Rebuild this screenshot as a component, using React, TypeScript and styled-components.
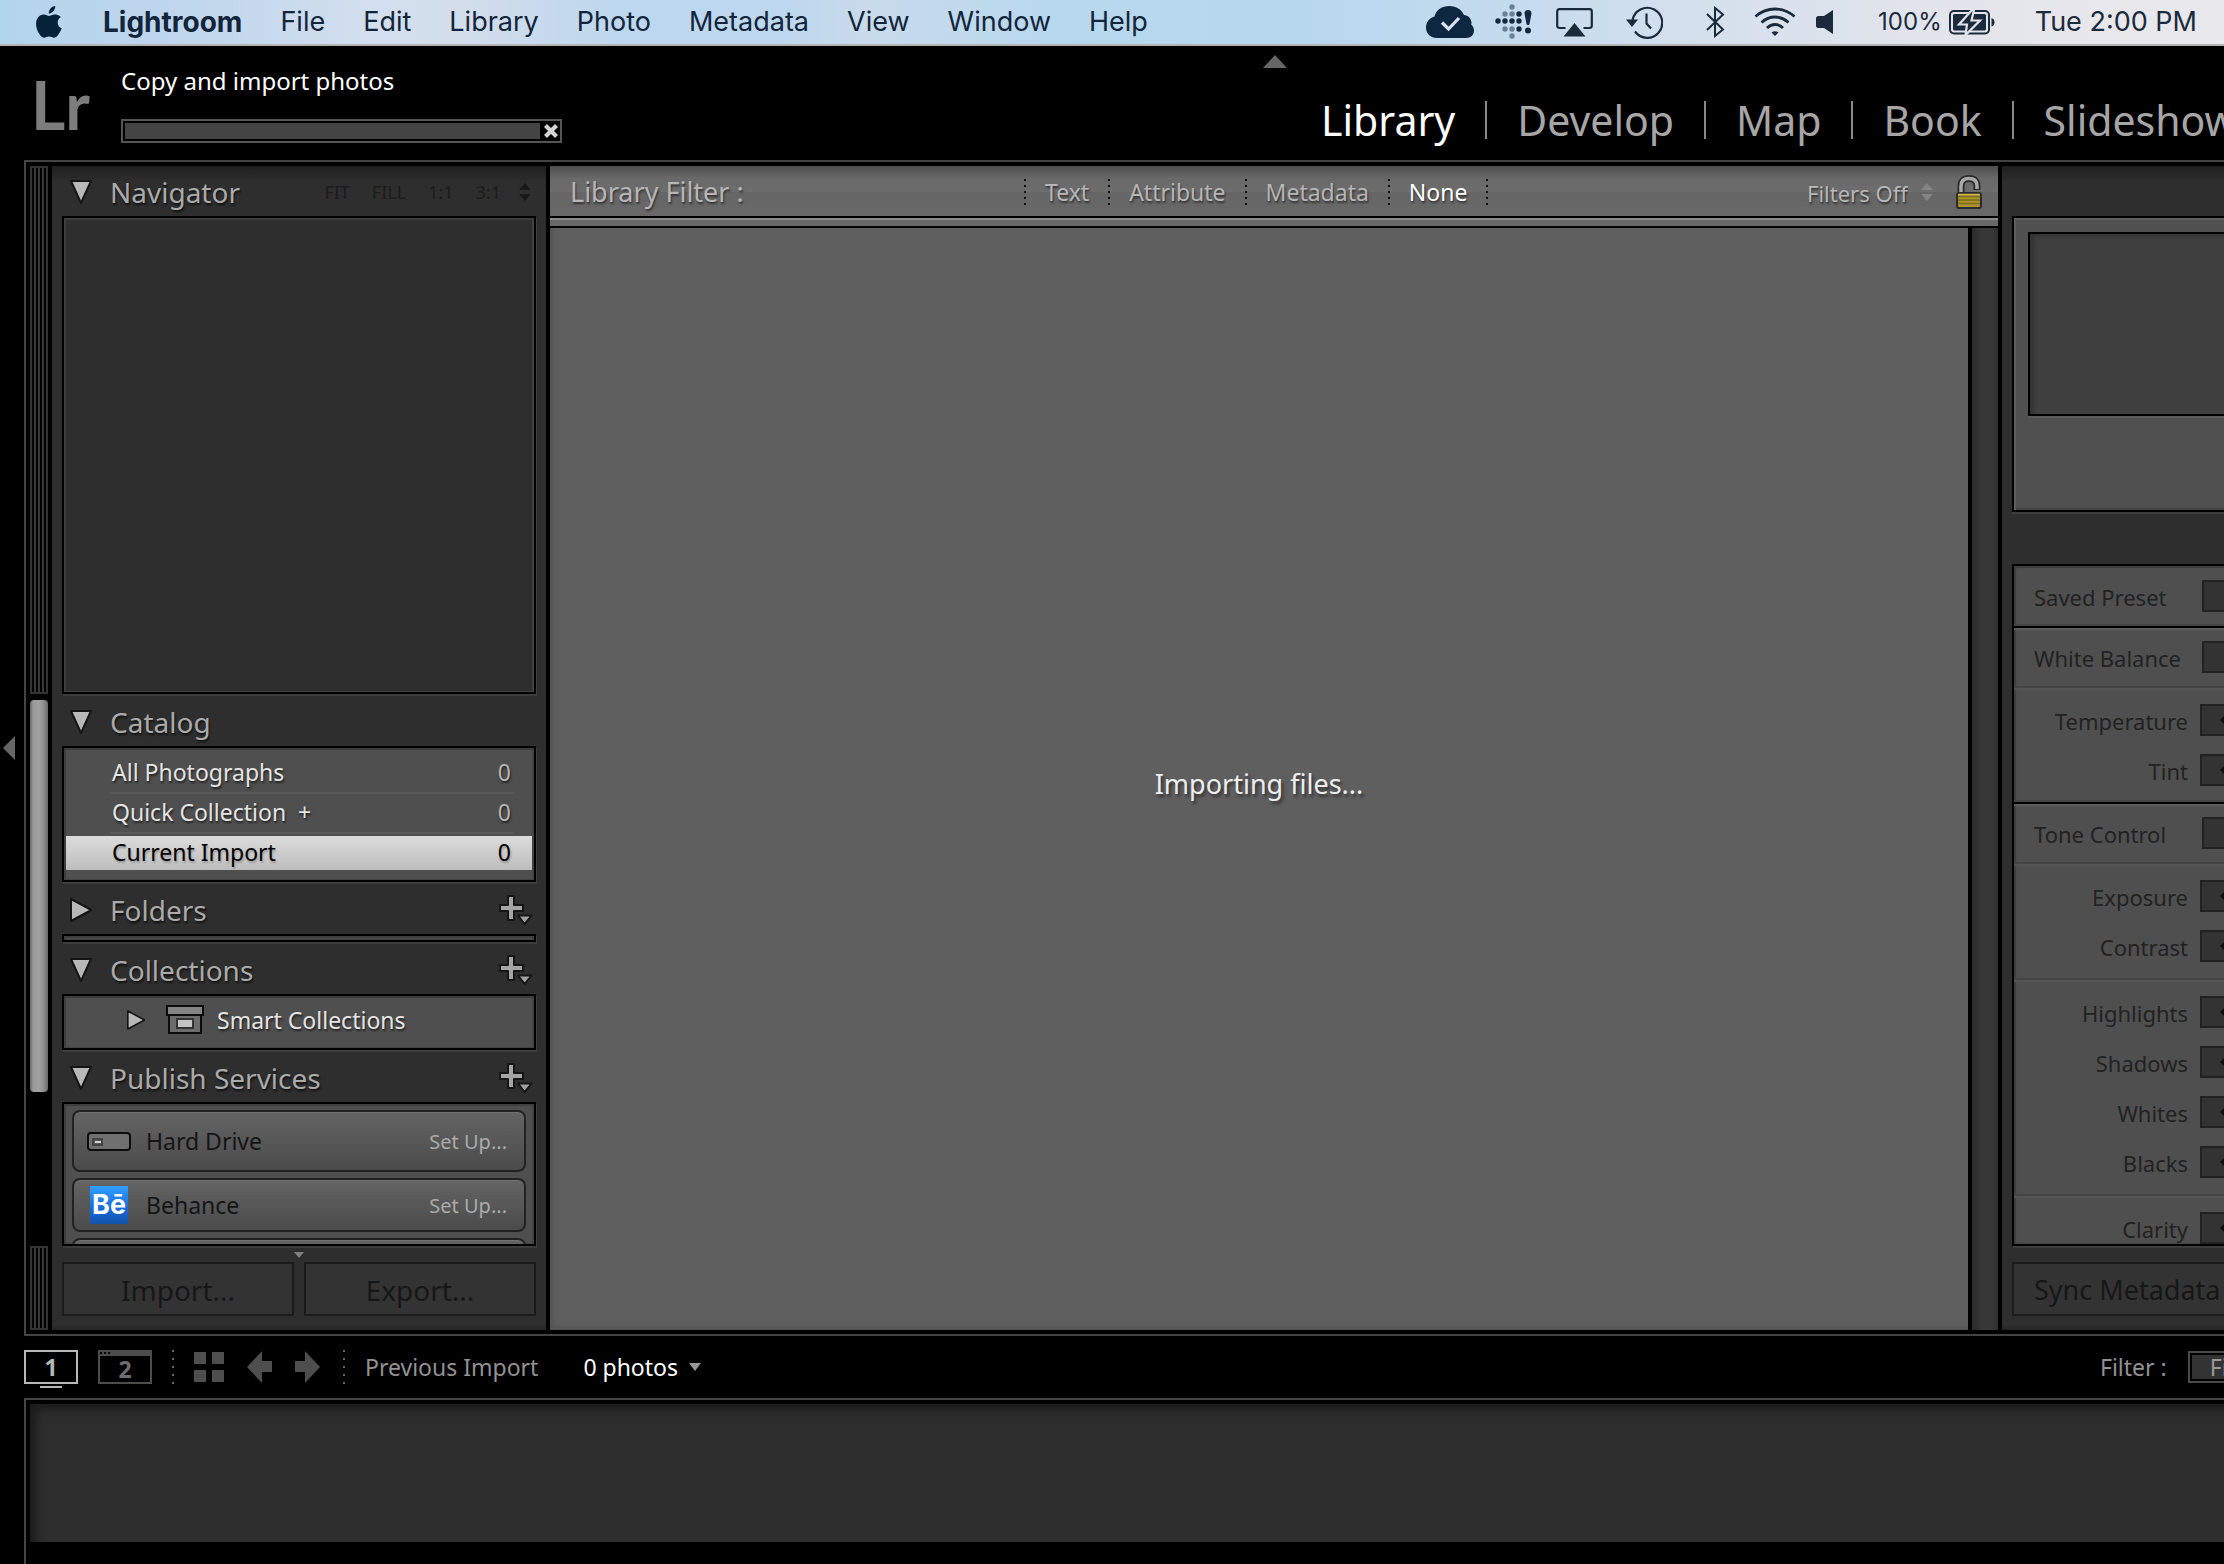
import React from "react";
import styled, { createGlobalStyle, css } from "styled-components";

const GlobalStyle = createGlobalStyle`
  *, *::before, *::after { box-sizing: border-box; }
  body { margin: 0; background: #000; }
  button, select { font: inherit; color: inherit; margin: 0; padding: 0; border: 0; border-radius: 0; background: none; appearance: none; text-align: left; white-space: nowrap; }
  svg { display: block; flex: none; }
  ul { list-style: none; margin: 0; padding: 0; }
`;

const Page = styled.div`
  display: flex;
  flex-direction: column;
  height: 100vh;
  min-width: 1400px;
  overflow: hidden;
  background: #000;
  color: #b0b0b0;
  font-family: "Noto Sans", "Open Sans", sans-serif;
  font-size: 23px;
  line-height: 32px;
`;

/* ---------- system menu bar ---------- */

const MenuBar = styled.header`
  flex: none;
  display: flex;
  align-items: center;
  height: 46px;
  padding: 0 27px 0 36px;
  border-bottom: 2px solid #b4b4b4;
  background: linear-gradient(90deg, #b3d4ed 0%, #bfd6ed 8%, #d3dfee 17%, #d3ddec 21%, #bcd7ee 28%, #bcd7ee 35%, #c9dbeb 39%, #b8d8ee 47%, #b6d7ee 58%, #c5dbee 68%, #d5e0ed 77%, #e4e5ec 88%, #e9e8ec 100%);
  color: #12253a;
  font-family: Inter, Roboto, sans-serif;
  font-size: 27px;
`;

const MenuList = styled.nav`
  display: flex;
  align-items: center;
  gap: 38px;
  margin-left: 41px;
`;

const MenuItem = styled.button<{ $app?: boolean }>`
  ${(p) => p.$app && css`font-size: 28px; font-weight: 700;`}
`;

const StatusArea = styled.div`
  display: flex;
  align-items: center;
  margin-left: auto;
  color: #1b2b3c;
`;

const StatusItem = styled.span<{ $gap: number; $small?: boolean }>`
  margin-left: ${(p) => p.$gap}px;
  font-size: ${(p) => (p.$small ? 24 : 27)}px;
  white-space: nowrap;
`;

/* ---------- identity bar ---------- */

const Header = styled.div`
  flex: none;
  display: flex;
  height: 114px;
  padding-left: 31px;
`;

const Logo = styled.div`
  flex: 0 0 90px;
  padding-top: 6px;
  color: #7d7d7d;
  font-family: Lato, sans-serif;
  font-size: 66px;
  font-weight: 700;
  line-height: 106px;
`;

const Activity = styled.div`
  display: flex;
  flex-direction: column;
  gap: 22px;
  width: 441px;
  padding-top: 19px;
  color: #fff;
  font-size: 24px;
`;

const ProgressFrame = styled.div`
  display: flex;
  align-items: center;
  gap: 4px;
  height: 24px;
  padding: 2px;
  border: 2px solid #555;
`;

const ProgressTrack = styled.div`
  flex: 1;
  height: 16px;
  background: #444;
`;

const ModuleArea = styled.div`
  flex: 0 0 961px;
  display: flex;
  flex-direction: column;
  align-items: flex-start;
  min-width: 0;
  margin-left: auto;
  padding-top: 9px;
`;

const ModuleNav = styled.nav`
  display: flex;
  align-items: center;
  gap: 30px;
  margin-top: 33px;
  padding-left: 58px;
  font-size: 41px;
  line-height: 38px;
`;

const ModuleLink = styled.a<{ $active?: boolean }>`
  color: ${(p) => (p.$active ? "#fff" : "#a6a6a6")};
  text-decoration: none;
  white-space: nowrap;
`;

const ModuleRule = styled.span`
  flex: none;
  width: 2px;
  height: 38px;
  background: #888;
`;

/* ---------- work area ---------- */

const WorkArea = styled.main`
  flex: 1;
  display: flex;
  min-height: 0;
`;

const Gutter = styled.div`
  flex: 0 0 24px;
  display: flex;
  align-items: center;
  padding-left: 3px;
`;

const Frame = styled.div`
  flex: 1;
  display: grid;
  grid-template-columns: 18px 494px minmax(0, 1fr) 222px;
  grid-template-rows: minmax(0, 1fr);
  gap: 4px;
  min-width: 0;
  padding: 4px 0 4px 4px;
  border: 2px solid #444;
  border-right: 0;
`;

const Scroller = styled.div`
  display: flex;
  flex-direction: column;
`;

const Grip = styled.div<{ $h: number }>`
  flex: 0 0 ${(p) => p.$h}px;
  border: 2px solid #333;
  background: repeating-linear-gradient(90deg, #000 0 2px, #383838 2px 4px);
  &:last-child { margin-top: auto; }
`;

const Thumb = styled.div`
  flex: 0 0 392px;
  margin-top: 6px;
  border-radius: 4px;
  background: linear-gradient(90deg, #666 0, #999 3px, #a2a2a2 50%, #8c8c8c 14px, #666 100%);
`;

const SidePanel = styled.aside`
  display: flex;
  flex-direction: column;
  min-height: 0;
  overflow: hidden;
  padding: 0 10px;
  background: linear-gradient(#1f1f1f, #2e2e2e 16px, #2e2e2e calc(100% - 6px), #262626);
`;

const PanelTitle = styled.div<{ $first?: boolean }>`
  flex: 0 0 ${(p) => (p.$first ? 50 : 52)}px;
  display: flex;
  align-items: center;
  padding: ${(p) => (p.$first ? 2 : 4)}px 0 0 8px;
`;

const TitleToggle = styled.button`
  display: flex;
  align-items: center;
  gap: 18px;
  color: #aaa;
  font-size: 28px;
  text-shadow: 1px 2px 2px #111;
`;

const TitleTools = styled.div`
  display: flex;
  align-items: center;
  margin-left: auto;
  padding: 2px 3px 0 0;
`;

const ZoomTools = styled(TitleTools)`
  gap: 22px;
  padding: 0 5px 0 0;
  color: #1c1c1c;
  font-size: 18px;
  & > :last-child { margin-left: -4px; }
`;

const Well = styled.div<{ $dark?: boolean; $h?: number; $fill?: boolean }>`
  flex: ${(p) => (p.$fill ? "1 1 0" : p.$h ? `0 0 ${p.$h}px` : "none")};
  min-height: 0;
  overflow: hidden;
  border: 2px solid #000;
  background: ${(p) => (p.$dark ? "#2e2e2e" : "#4f4f4f")};
  box-shadow: 1px 2px 0 #3d3d3d, inset 2px 2px 1px #3e3e3e, inset -2px -1px 1px #434343;
`;

const CatalogList = styled.ul`
  display: flex;
  flex-direction: column;
  gap: 2px;
  padding: 8px 0 10px;
`;

const CatalogDivider = styled.li`
  height: 2px;
  margin: 0 20px 0 46px;
  background: #595959;
`;

const CatalogRow = styled.button<{ $selected?: boolean }>`
  display: flex;
  justify-content: space-between;
  align-items: center;
  width: calc(100% - 4px);
  height: 34px;
  margin: 0 2px;
  padding: 0 21px 3px 46px;
  color: #e4e4e4;
  text-shadow: 1px 2px 2px #222;
  white-space: pre;
  & > span:last-child { color: #b4b4b4; }
  ${(p) =>
    p.$selected &&
    css`
      color: #000;
      background: linear-gradient(#dcdcdc, #bdbdbd);
      text-shadow: 1px 2px 2px #999;
      & > span:last-child { color: #000; }
    `}
`;

const CollectionRow = styled.button`
  display: flex;
  align-items: center;
  width: 100%;
  height: 48px;
  padding-left: 63px;
  color: #e4e4e4;
  text-shadow: 1px 2px 2px #222;
  & > svg:nth-child(2) { margin: 0 13px 0 21px; }
`;

const ServiceList = styled.ul`
  display: flex;
  flex-direction: column;
  gap: 6px;
  padding: 6px 8px;
`;

const ServiceCard = styled.li<{ $h: number }>`
  flex: 0 0 ${(p) => p.$h}px;
  display: flex;
  align-items: center;
  padding: 0 17px 0 13px;
  border: 2px solid #222;
  border-radius: 8px;
  background: linear-gradient(#646464, #4b4b4b);
  box-shadow: inset 0 1px 0 #717171;
  color: #151515;
`;

const ServiceIcon = styled.span`
  display: flex;
  justify-content: center;
  width: 44px;
  margin-right: 15px;
`;

const BehanceTile = styled.span`
  width: 38px;
  height: 38px;
  background: linear-gradient(#2fa0ff, #1769dd 60%, #1352a8);
  color: #fff;
  font: 700 27px/38px Inter, sans-serif;
  text-align: center;
`;

const SetUp = styled.button`
  margin-left: auto;
  padding-top: 2px;
  color: #aaa;
  font-size: 20px;
`;

const PanelFooter = styled.div`
  flex: 0 0 84px;
  display: flex;
  flex-direction: column;
  align-items: center;
  gap: 4px;
  padding-top: 6px;
`;

const FooterButtons = styled.div`
  display: flex;
  align-self: stretch;
  gap: 10px;
`;

const FooterButton = styled.button<{ $start?: boolean }>`
  flex: 1;
  height: 54px;
  padding: 2px 20px 0;
  border: 2px solid #1b1b1b;
  background: #333;
  color: #171717;
  font-size: 28px;
  text-align: ${(p) => (p.$start ? "left" : "center")};
`;

/* ---------- centre ---------- */

const Center = styled.section`
  display: flex;
  flex-direction: column;
  min-width: 0;
`;

const FilterBar = styled.div`
  flex: 0 0 50px;
  display: flex;
  align-items: center;
  padding: 2px 16px 0 20px;
  background: linear-gradient(#4e4e4e, #686868 12px, #6e6e6e 26px, #666 26px, #686868);
  color: #b6b6b6;
  text-shadow: 1px 2px 2px #333;
`;

const FilterTitle = styled.span`
  flex: 0 0 454px;
  font-size: 27px;
`;

const FilterTabs = styled.div`
  display: flex;
  align-items: center;
  gap: 19px;
`;

const FilterTab = styled.button<{ $active?: boolean }>`
  color: ${(p) => (p.$active ? "#fff" : "inherit")};
  text-shadow: inherit;
`;

const Dots = styled.span<{ $sparse?: boolean }>`
  flex: none;
  width: 2px;
  height: ${(p) => (p.$sparse ? 34 : 26)}px;
  background: repeating-linear-gradient(${(p) => (p.$sparse ? "#666" : "#0c0c0c")} 0 2px, transparent 2px ${(p) => (p.$sparse ? 8 : 6)}px);
`;

const FilterPreset = styled.div`
  display: flex;
  align-items: center;
  gap: 13px;
  margin-left: auto;
  & > button { margin-left: 10px; }
  select { padding-top: 2px; font-size: 22px; text-shadow: inherit; }
`;

const BarEdge = styled.div`
  flex: 0 0 12px;
  border: 2px solid #000;
  border-width: 2px 0;
  background: linear-gradient(#8a8a8a 2px, #686868 2px);
`;

const CanvasRow = styled.div`
  flex: 1;
  display: grid;
  grid-template-columns: minmax(0, 1fr) 26px;
  gap: 4px;
  min-height: 0;
`;

const Canvas = styled.div`
  display: grid;
  place-items: center;
  padding-top: 10px;
  background: #5f5f5f;
  box-shadow: inset 4px -4px 4px #555;
  color: #ededed;
  font-size: 27px;
  text-shadow: 2px 3px 3px #333;
`;

const CanvasScroll = styled.div`
  background: linear-gradient(90deg, #2b2b2b, #373737 10px, #373737 20px, #2e2e2e);
`;

/* ---------- right panel ---------- */

const RightPanel = styled(SidePanel)`
  padding: 50px 0 14px 10px;
  color: #222;
  font-size: 22px;
`;

const HistogramWell = styled(Well)`
  width: 480px;
  margin-bottom: 52px;
  padding: 14px;
  background: #505050;
  box-shadow: 0 2px 0 #3d3d3d, inset 2px 2px 0 #5e5e5e, inset 0 -2px 0 #444;
`;

const Histogram = styled.div`
  height: 184px;
  border: 2px solid #000;
  background: #404040;
  box-shadow: 0 2px 0 #5c5c5c, inset 4px 3px 4px #333;
`;

const DevelopWell = styled(Well)`
  width: 480px;
`;

const Group = styled.div<{ $rule?: "strong" | "soft" }>`
  ${(p) => p.$rule === "strong" && css`border-top: 2px solid #000; box-shadow: inset 0 2px 0 #5c5c5c, 0 -2px 0 #444;`}
  ${(p) => p.$rule === "soft" && css`border-top: 2px solid #444; box-shadow: inset 0 2px 0 #555; padding: 7px 0;`}
`;

const PresetRow = styled.div<{ $h: number }>`
  display: grid;
  grid-template-columns: 168px 1fr;
  align-items: center;
  height: ${(p) => p.$h}px;
  padding-left: 20px;
  & > label { padding-top: 2px; }
`;

const SliderRow = styled.div`
  display: grid;
  grid-template-columns: 174px 1fr;
  column-gap: 12px;
  align-items: center;
  height: 50px;
  & > span { padding-top: 2px; text-align: right; }
`;

const fieldBox = css`
  width: 200px;
  height: 32px;
  border: 2px solid #222;
  background: #333;
`;

const PresetSelect = styled.select`
  ${fieldBox}
  opacity: 1;
`;

const StepButton = styled.button`
  ${fieldBox}
  padding-left: 18px;
`;

const SyncButton = styled(FooterButton)`
  flex: 0 0 54px;
  width: 480px;
  margin-top: 16px;
  font-size: 27px;
`;

/* ---------- toolbar and filmstrip ---------- */

const Toolbar = styled.div`
  flex: 0 0 62px;
  display: flex;
  align-items: center;
  gap: 20px;
  padding-left: 24px;
  color: #929292;
`;

const NavButtons = styled.div`
  display: flex;
  align-items: center;
  gap: 23px;
  padding-right: 3px;
`;

const DisplayButton = styled.button<{ $main?: boolean }>`
  position: relative;
  width: 54px;
  height: 34px;
  border: 2px solid ${(p) => (p.$main ? "#b8b8b8" : "#4c4c4c")};
  border-top-width: ${(p) => (p.$main ? 2 : 6)}px;
  color: ${(p) => (p.$main ? "#b8b8b8" : "#6e6e6e")};
  font-weight: 700;
  line-height: 26px;
  text-align: center;
  &::after {
    content: "";
    position: absolute;
    ${(p) =>
      p.$main
        ? "left: 14px; bottom: -6px; width: 22px; height: 2px; background: #b8b8b8;"
        : "left: 0; top: -4px; width: 10px; height: 2px; background: repeating-linear-gradient(90deg, #000 0 2px, transparent 2px 4px);"}
  }
`;

const PhotoCount = styled.button`
  display: flex;
  align-items: center;
  gap: 11px;
  margin-left: 25px;
  color: #fff;
`;

const FilmFilter = styled.div`
  flex: 0 0 124px;
  display: flex;
  align-items: center;
  gap: 21px;
  margin-left: auto;
  overflow: hidden;
  white-space: nowrap;
`;

const FilmSelect = styled.select`
  flex: none;
  width: 160px;
  height: 32px;
  padding-left: 20px;
  border: 2px solid #4a4a4a;
  outline: 2px solid #000;
  outline-offset: -4px;
  background: #333;
  color: #999;
  line-height: 28px;
`;

const Filmstrip = styled.section`
  flex: 0 0 166px;
  margin-left: 24px;
  padding: 4px 0 22px 4px;
  border: 2px solid #444;
  border-width: 2px 0 0 2px;
`;

const Film = styled.div`
  height: 100%;
  background: #2e2e2e;
  box-shadow: inset 8px 8px 10px -2px #1b1b1b;
`;

/* ---------- icons ---------- */

const Apple = () => (
  <svg width="26" height="32" viewBox="0 0 26 32" fill="#06213a">
    <path d="M19.2 0c.2 1.9-.6 3.700-1.700 5.100-1.200 1.400-3 2.400-4.700 2.300-.2-1.800.7-3.700 1.700-4.900C15.700 1.100 17.700.1 19.200 0zM24.900 10.900c-2 1.200-3.200 3.100-3.200 5.500 0 2.800 1.700 5 4 5.900-.6 1.900-1.600 3.800-2.800 5.500-1.300 1.900-2.700 3.900-4.800 3.900-2 0-2.600-1.200-5-1.200-2.300 0-3.100 1.200-5 1.200-2 .1-3.600-2-4.900-3.900C.5 24-1.300 17.200 1.400 12.500c1.400-2.400 3.800-3.900 6.500-3.900 2 0 4 1.400 5.200 1.400 1.200 0 3.600-1.700 6-1.400 1 0 4 .4 5.800 2.300z" />
  </svg>
);

const CloudCheck = () => (
  <svg width="48" height="32" viewBox="0 0 48 32">
    <path d="M11 32C4.500 32 0 27.500 0 21.500 0 16 3.500 12 8.500 10.500 10 4 16 0 23.500 0c7 0 12 3.500 14.500 9 4 .3 7 3 7.500 7.500-.1 1-.1 1.500-.3 2C47 20 48 22 48 24.500 48 29 45 32 40 32z" fill="#0d2740" />
    <path d="M16 16.500l6.500 6.500L33 12" fill="none" stroke="#d5e4f2" strokeWidth="3.200" />
  </svg>
);

const dots: [number, number, boolean][] = [
  [17, 3, false], [10, 10, false], [17, 10, false], [24, 10, true],
  [3, 17, true], [10, 17, true], [17, 17, true], [24, 17, true],
  [10, 25, false], [17, 25, false], [24, 25, true], [17, 32, false],
];

const DotAlert = () => (
  <svg width="38" height="36" viewBox="0 0 38 36" fill="#12283e">
    {dots.map(([x, y, on], i) => (
      <circle key={i} cx={x} cy={y} r="2.700" opacity={on ? 1 : 0.5} />
    ))}
    <path d="M33 6c2 0 3.500 1 3.500 3.500L34.500 20c-.3 1.600-2.700 1.600-3 0l-2-10.500C29.500 7 31 6 33 6z" />
    <circle cx="33" cy="26.500" r="3" />
  </svg>
);

const AirPlay = () => (
  <svg width="37" height="29" viewBox="0 0 37 29">
    <path d="M9.500 20H3.500Q1.200 20 1.200 17.500V3.500Q1.200 1.200 3.500 1.200h30Q35.800 1.200 35.800 3.500v14q0 2.500-2.300 2.500h-6" fill="none" stroke="currentColor" strokeWidth="2.200" />
    <path d="M18.500 15L29.500 28.500H7.500z" fill="currentColor" />
  </svg>
);

const TimeMachine = () => (
  <svg width="37" height="33" viewBox="0 0 37 33">
    <path d="M6.500 14A15 15 0 1 1 9 25.500" fill="none" stroke="currentColor" strokeWidth="2.200" />
    <path d="M0 13.500h12L6 21z" fill="currentColor" />
    <path d="M20.500 7.500v10l4.500 5" fill="none" stroke="currentColor" strokeWidth="2.200" />
  </svg>
);

const Bluetooth = () => (
  <svg width="20" height="32" viewBox="0 0 20 32" fill="none" stroke="currentColor" strokeWidth="2">
    <path d="M1 8l16 15.500-8 6.500V2l8 6.500L1 24" />
  </svg>
);

const Wifi = () => (
  <svg width="42" height="30" viewBox="0 0 42 30" fill="none" stroke="currentColor" strokeWidth="2.800">
    <path d="M1.500 9.500Q10 2 21 2t19.500 7.500M7.500 15.500Q13.500 10 21 10t13.500 5.500M13 21q3.500-3.500 8-3.500T29 21" />
    <path d="M17.500 25.500q3.500-2.500 7 0L21 29z" fill="currentColor" stroke="none" />
  </svg>
);

const Speaker = () => (
  <svg width="18" height="24" viewBox="0 0 18 24" fill="currentColor">
    <path d="M2.500 6H8l9-6v24l-9-6H2.500Q0 18 0 15.500v-7Q0 6 2.500 6z" />
  </svg>
);

const Battery = () => (
  <svg width="46" height="25" viewBox="0 0 46 25">
    <rect x="1" y="1" width="39" height="22.500" rx="4" fill="none" stroke="currentColor" strokeWidth="2" />
    <rect x="4" y="4" width="33" height="16.500" rx="1.500" fill="currentColor" />
    <path d="M42.500 8q3 1 3 4.300t-3 4.300z" fill="currentColor" />
    <path d="M23 0L10 14.500h8L16.500 25 31 10.500h-8.500L25 0z" fill="currentColor" stroke="#e2e4ec" strokeWidth="2.200" />
  </svg>
);

const Cross = () => (
  <svg width="14" height="14" viewBox="0 0 14 14" stroke="#d4d4d4" strokeWidth="4.200">
    <path d="M1.500 1.500l11 11M12.500 1.500l-11 11" />
  </svg>
);

const Triangle = ({ dir = "down", small }: { dir?: "down" | "right"; small?: boolean }) => (
  <svg width={small ? 18 : 22} height={small ? 20 : 24} viewBox="0 0 22 24" fill="#b8b8b8" stroke="#151515" strokeWidth="2" strokeLinejoin="round">
    <path d={dir === "down" ? "M1 1h20L11 23z" : "M1 1v22L21.500 12z"} />
  </svg>
);

const Flat = ({ w, h, d, fill }: { w: number; h: number; d: string; fill: string }) => (
  <svg width={w} height={h} viewBox={`0 0 ${w} ${h}`} fill={fill}>
    <path d={d} />
  </svg>
);

const AddMenu = () => (
  <svg width="34" height="32" viewBox="0 0 34 32" stroke="#151515" strokeWidth="2" strokeLinejoin="round">
    <path d="M9 1h6v9h9v6h-9v9H9v-9H1v-6h8z" fill="#a4a4a4" />
    <path d="M19 20.500h13.500L25.700 29z" fill="#a0a0a0" />
  </svg>
);

const UpDown = ({ fill }: { fill: string }) => (
  <svg width="12" height="18" viewBox="0 0 12 18" fill={fill}>
    <path d="M6 0l6 7H0zM6 18l6-7H0z" />
  </svg>
);

const CollectionBox = () => (
  <svg width="38" height="30" viewBox="0 0 38 30" stroke="#0c0c0c" strokeWidth="2">
    <rect x="3" y="9" width="32" height="19" fill="#6c6c6c" />
    <rect x="1" y="1" width="36" height="9" fill="#848484" />
    <rect x="11" y="14" width="16" height="9" fill="#c4c4c4" stroke="#333" />
  </svg>
);

const HardDrive = () => (
  <svg width="44" height="19" viewBox="0 0 44 19">
    <rect x="1" y="1" width="42" height="17" rx="3" fill="#707070" stroke="#0c0c0c" strokeWidth="2" />
    <rect x="6" y="7" width="9" height="6" fill="#5a5a5a" stroke="#444" strokeWidth="2" />
    <rect x="8" y="9" width="6" height="2" fill="#d0d0d0" />
  </svg>
);

const Padlock = () => (
  <svg width="26" height="34" viewBox="0 0 26 34">
    <path d="M5 19v-8C5 6 8 3.500 13 3.500s8 2.500 8 7.500v4" fill="none" stroke="#2b2b2b" strokeWidth="7" />
    <path d="M5 19v-8C5 6 8 3.500 13 3.500s8 2.500 8 7.500v3" fill="none" stroke="#a8a8a8" strokeWidth="3.500" />
    <rect x="1" y="18" width="24" height="15" rx="2" fill="#a8922a" stroke="#2b2b2b" strokeWidth="2" />
    <path d="M2 21.500h22M2 25h22M2 28.500h22" stroke="#7d6b1a" strokeWidth="1.500" />
    <path d="M2 19.500h22" stroke="#c9ba55" strokeWidth="1.500" />
  </svg>
);

const GridIcon = () => (
  <Flat w={30} h={30} fill="#4e4e4e" d="M0 0h12v12H0zM18 0h12v12H18zM0 18h12v12H0zM18 18h12v12H18z" />
);

/* ---------- composed parts ---------- */

const menus = ["File", "Edit", "Library", "Photo", "Metadata", "View", "Window", "Help"];
const modules = ["Library", "Develop", "Map", "Book", "Slideshow"];
const filters = ["Text", "Attribute", "Metadata", "None"];
const catalog = [
  { name: "All Photographs", count: 0 },
  { name: "Quick Collection  +", count: 0 },
  { name: "Current Import", count: 0, selected: true },
];

function Title({ children, closed, add }: { children: string; closed?: boolean; add?: boolean }) {
  return (
    <PanelTitle>
      <TitleToggle aria-expanded={!closed}>
        <Triangle dir={closed ? "right" : "down"} />
        {children}
      </TitleToggle>
      {add && (
        <TitleTools>
          <button aria-label={`Add to ${children}`}><AddMenu /></button>
        </TitleTools>
      )}
    </PanelTitle>
  );
}

function Preset({ label, h }: { label: string; h: number }) {
  const id = React.useId();
  return (
    <PresetRow $h={h}>
      <label htmlFor={id}>{label}</label>
      <PresetSelect id={id} disabled />
    </PresetRow>
  );
}

function Sliders({ names }: { names: string[] }) {
  return (
    <Group $rule="soft">
      {names.map((n) => (
        <SliderRow key={n}>
          <span>{n}</span>
          <StepButton aria-label={`Decrease ${n}`}>
            <Flat w={10} h={10} fill="#0e0e0e" d="M0 5l5-5h5v10H5z" />
          </StepButton>
        </SliderRow>
      ))}
    </Group>
  );
}

export default function App() {
  return (
    <Page>
      <GlobalStyle />
      <MenuBar>
        <button aria-label="System menu"><Apple /></button>
        <MenuList>
          <MenuItem $app>Lightroom</MenuItem>
          {menus.map((m) => <MenuItem key={m}>{m}</MenuItem>)}
        </MenuList>
        <StatusArea>
          <StatusItem $gap={0}><CloudCheck /></StatusItem>
          <StatusItem $gap={21}><DotAlert /></StatusItem>
          <StatusItem $gap={23}><AirPlay /></StatusItem>
          <StatusItem $gap={33}><TimeMachine /></StatusItem>
          <StatusItem $gap={43}><Bluetooth /></StatusItem>
          <StatusItem $gap={28}><Wifi /></StatusItem>
          <StatusItem $gap={20}><Speaker /></StatusItem>
          <StatusItem $gap={44} $small>100%</StatusItem>
          <StatusItem $gap={7}><Battery /></StatusItem>
          <StatusItem $gap={40}>Tue 2:00 PM</StatusItem>
        </StatusArea>
      </MenuBar>

      <Header>
        <Logo>Lr</Logo>
        <Activity>
          <span>Copy and import photos</span>
          <ProgressFrame>
            <ProgressTrack role="progressbar" aria-label="Copy and import photos" />
            <button aria-label="Cancel import"><Cross /></button>
          </ProgressFrame>
        </Activity>
        <ModuleArea>
          <button aria-label="Hide module picker"><Flat w={24} h={13} fill="#666" d="M12 0l12 13H0z" /></button>
          <ModuleNav>
            {modules.map((m, i) => (
              <React.Fragment key={m}>
                {i > 0 && <ModuleRule />}
                <ModuleLink href={`#${m.toLowerCase()}`} $active={i === 0}>{m}</ModuleLink>
              </React.Fragment>
            ))}
          </ModuleNav>
        </ModuleArea>
      </Header>

      <WorkArea>
        <Gutter>
          <button aria-label="Hide left panel"><Flat w={12} h={24} fill="#666" d="M12 0v24L0 12z" /></button>
        </Gutter>
        <Frame>
          <Scroller>
            <Grip $h={528} />
            <Thumb />
            <Grip $h={84} />
          </Scroller>

          <SidePanel>
            <PanelTitle $first>
              <TitleToggle aria-expanded><Triangle />Navigator</TitleToggle>
              <ZoomTools>
                <button>FIT</button>
                <button>FILL</button>
                <button>1:1</button>
                <button>3:1</button>
                <button aria-label="Zoom ratio"><UpDown fill="#1a1a1a" /></button>
              </ZoomTools>
            </PanelTitle>
            <Well $dark $h={478} />

            <Title>Catalog</Title>
            <Well>
              <CatalogList>
                {catalog.map((c, i) => (
                  <React.Fragment key={c.name}>
                    {i > 0 && <CatalogDivider aria-hidden />}
                    <li>
                      <CatalogRow $selected={c.selected}>
                        <span>{c.name}</span>
                        <span>{c.count}</span>
                      </CatalogRow>
                    </li>
                  </React.Fragment>
                ))}
              </CatalogList>
            </Well>

            <Title closed add>Folders</Title>
            <Well $h={8} />

            <Title add>Collections</Title>
            <Well $h={56}>
              <CollectionRow>
                <Triangle dir="right" small />
                <CollectionBox />
                Smart Collections
              </CollectionRow>
            </Well>

            <Title add>Publish Services</Title>
            <Well $fill>
              <ServiceList>
                <ServiceCard $h={62}>
                  <ServiceIcon><HardDrive /></ServiceIcon>
                  Hard Drive
                  <SetUp>Set Up...</SetUp>
                </ServiceCard>
                <ServiceCard $h={54}>
                  <ServiceIcon><BehanceTile>Bē</BehanceTile></ServiceIcon>
                  Behance
                  <SetUp>Set Up...</SetUp>
                </ServiceCard>
                <ServiceCard $h={54} />
              </ServiceList>
            </Well>

            <PanelFooter>
              <Flat w={10} h={6} fill="#808080" d="M0 0h10L5 6z" />
              <FooterButtons>
                <FooterButton>Import...</FooterButton>
                <FooterButton>Export...</FooterButton>
              </FooterButtons>
            </PanelFooter>
          </SidePanel>

          <Center>
            <FilterBar>
              <FilterTitle>Library Filter :</FilterTitle>
              <FilterTabs>
                <Dots />
                {filters.map((f) => (
                  <React.Fragment key={f}>
                    <FilterTab $active={f === "None"}>{f}</FilterTab>
                    <Dots />
                  </React.Fragment>
                ))}
              </FilterTabs>
              <FilterPreset>
                <select aria-label="Filter preset"><option>Filters Off</option></select>
                <UpDown fill="#858585" />
                <button aria-label="Lock filters"><Padlock /></button>
              </FilterPreset>
            </FilterBar>
            <BarEdge />
            <CanvasRow>
              <Canvas>Importing files...</Canvas>
              <CanvasScroll />
            </CanvasRow>
          </Center>

          <RightPanel>
            <HistogramWell $h={296}><Histogram /></HistogramWell>
            <DevelopWell $fill>
              <Group><Preset label="Saved Preset" h={60} /></Group>
              <Group $rule="strong"><Preset label="White Balance" h={58} /></Group>
              <Sliders names={["Temperature", "Tint"]} />
              <Group $rule="strong"><Preset label="Tone Control" h={58} /></Group>
              <Sliders names={["Exposure", "Contrast"]} />
              <Sliders names={["Highlights", "Shadows", "Whites", "Blacks"]} />
              <Sliders names={["Clarity"]} />
            </DevelopWell>
            <SyncButton $start>Sync Metadata</SyncButton>
          </RightPanel>
        </Frame>
      </WorkArea>

      <Toolbar>
        <DisplayButton $main>1</DisplayButton>
        <DisplayButton>2</DisplayButton>
        <Dots $sparse />
        <NavButtons>
          <button aria-label="Grid"><GridIcon /></button>
          <button aria-label="Back"><Flat w={25} h={32} fill="#4e4e4e" d="M15 0v10h10v11H15v11L0 16z" /></button>
          <button aria-label="Forward"><Flat w={25} h={32} fill="#4e4e4e" d="M10 0v10H0v11h10v11L25 16z" /></button>
        </NavButtons>
        <Dots $sparse />
        <span>Previous Import</span>
        <PhotoCount>
          0 photos
          <Flat w={12} h={8} fill="#999" d="M0 0h12L6 8z" />
        </PhotoCount>
        <FilmFilter>
          <label htmlFor="film-filter">Filter :</label>
          <FilmSelect id="film-filter"><option>Filters Off</option></FilmSelect>
        </FilmFilter>
      </Toolbar>

      <Filmstrip>
        <Film />
      </Filmstrip>
    </Page>
  );
}
